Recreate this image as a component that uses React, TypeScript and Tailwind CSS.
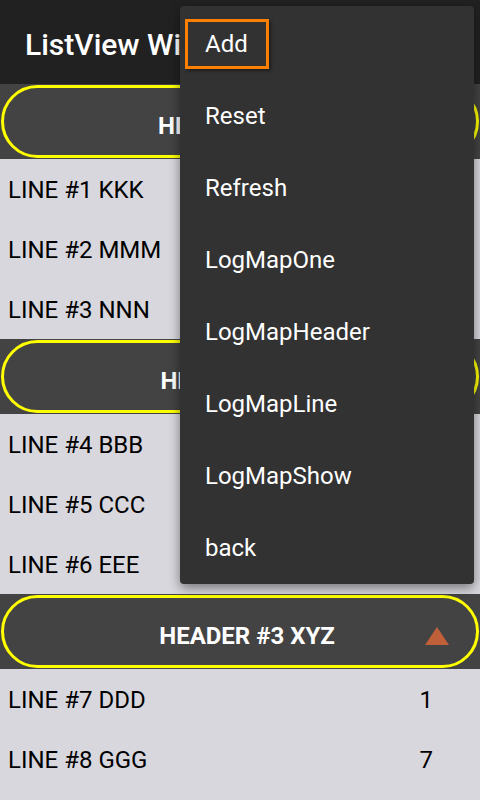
import React from "react";

const GROUPS = [
  {
    title: "HEADER #1 ABC",
    lines: [
      { label: "LINE #1 KKK", value: "" },
      { label: "LINE #2 MMM", value: "" },
      { label: "LINE #3 NNN", value: "" },
    ],
  },
  {
    title: "HEADER #2 DEF",
    lines: [
      { label: "LINE #4 BBB", value: "" },
      { label: "LINE #5 CCC", value: "" },
      { label: "LINE #6 EEE", value: "" },
    ],
  },
  {
    title: "HEADER #3 XYZ",
    lines: [
      { label: "LINE #7 DDD", value: "1" },
      { label: "LINE #8 GGG", value: "7" },
    ],
  },
];

const MENU = ["Add", "Reset", "Refresh", "LogMapOne", "LogMapHeader", "LogMapLine", "LogMapShow", "back"];

function Header({ title }: { title: string }) {
  return (
    <div className="h-[75px] bg-[#434343] p-[1px]">
      <div className="relative h-full rounded-full border-[3px] border-[#ffff00] flex items-center justify-center pl-[14px] pt-[9px]">
        <span className="text-white font-bold text-[24px]">{title}</span>
        <svg className="absolute right-[27px] top-[29px]" width="24" height="18" viewBox="0 0 24 18">
          <polygon points="12,0 24,18 0,18" fill="#c0603a" />
        </svg>
      </div>
    </div>
  );
}

export default function App() {
  return (
    <div className="relative w-[480px] h-[800px] overflow-hidden bg-[#d8d7dd] font-['Roboto',sans-serif]">
      <div className="h-[84px] bg-[#212121] flex items-center px-[25px] pt-[4px]">
        <h1 className="text-white text-[30px] font-medium whitespace-nowrap">ListView With Headers</h1>
      </div>

      {GROUPS.map((g) => (
        <div key={g.title}>
          <Header title={g.title} />
          {g.lines.map((l) => (
            <div key={l.label} className="h-[60px] flex items-center justify-between pl-[8px] pr-[47px] pt-[2px] text-black text-[24px]">
              <span>{l.label}</span>
              <span>{l.value}</span>
            </div>
          ))}
        </div>
      ))}

      {/* overflow menu */}
      <div className="absolute left-[180px] top-[6px] w-[294px] rounded-[4px] bg-[#323232] pt-[2px] shadow-[0_4px_12px_rgba(0,0,0,0.45)]">
        {MENU.map((m, i) => (
          <div key={m} className="h-[72px] flex items-center px-[5px]">
            {i === 0 ? (
              <div className="h-[50px] w-[84px] border-[3px] border-[#ff8000] flex items-center pl-[17px] shadow-[2px_2px_3px_rgba(0,0,0,0.4)]">
                <span className="text-white text-[24px]">{m}</span>
              </div>
            ) : (
              <span className="text-white text-[24px] pl-[20px]">{m}</span>
            )}
          </div>
        ))}
      </div>
    </div>
  );
}
